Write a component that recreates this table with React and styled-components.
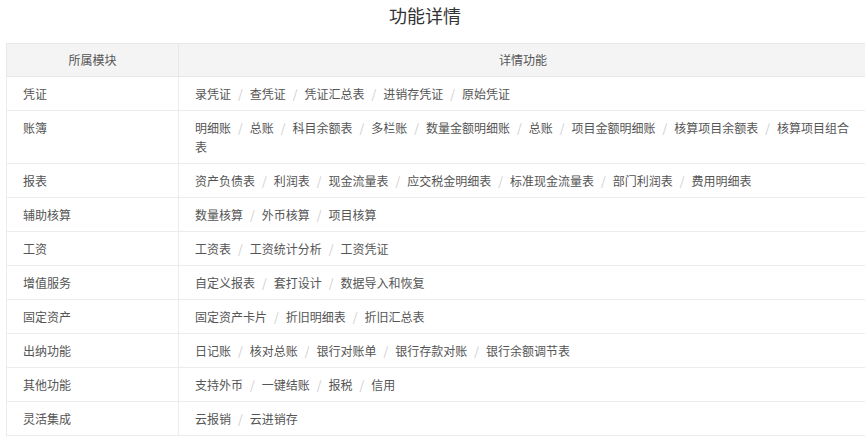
import React from "react";
import styled, { createGlobalStyle } from "styled-components";

const GlobalStyle = createGlobalStyle`
  html, body {
    margin: 0;
    padding: 0;
    background: #fff;
    overflow: hidden;
  }
  body {
    font-family: "Noto Sans CJK SC", "Noto Sans", sans-serif;
  }
`;

const rows = [
  { module: "凭证", items: ["录凭证", "查凭证", "凭证汇总表", "进销存凭证", "原始凭证"] },
  {
    module: "账簿",
    items: [
      "明细账",
      "总账",
      "科目余额表",
      "多栏账",
      "数量金额明细账",
      "总账",
      "项目金额明细账",
      "核算项目余额表",
      "核算项目组合表",
    ],
  },
  {
    module: "报表",
    items: ["资产负债表", "利润表", "现金流量表", "应交税金明细表", "标准现金流量表", "部门利润表", "费用明细表"],
  },
  { module: "辅助核算", items: ["数量核算", "外币核算", "项目核算"] },
  { module: "工资", items: ["工资表", "工资统计分析", "工资凭证"] },
  { module: "增值服务", items: ["自定义报表", "套打设计", "数据导入和恢复"] },
  { module: "固定资产", items: ["固定资产卡片", "折旧明细表", "折旧汇总表"] },
  { module: "出纳功能", items: ["日记账", "核对总账", "银行对账单", "银行存款对账", "银行余额调节表"] },
  { module: "其他功能", items: ["支持外币", "一键结账", "报税", "信用"] },
  { module: "灵活集成", items: ["云报销", "云进销存"] },
];

export default function App() {
  return (
    <Page>
      <GlobalStyle />
      <Title>功能详情</Title>
      <Table>
        <colgroup>
          <col style={{ width: 172 }} />
          <col />
        </colgroup>
        <thead>
          <tr>
            <HeadCell>所属模块</HeadCell>
            <HeadCell>详情功能</HeadCell>
          </tr>
        </thead>
        <tbody>
          {rows.map((row, index) => (
            <tr key={index}>
              <Cell>{row.module}</Cell>
              <Cell>
                {row.items.map((item, i) => (
                  <React.Fragment key={i}>
                    {i > 0 && <Sep>/</Sep>}
                    {item}
                  </React.Fragment>
                ))}
              </Cell>
            </tr>
          ))}
        </tbody>
      </Table>
    </Page>
  );
}

const Page = styled.div`
  width: 865px;
  height: 440px;
  overflow: hidden;
`;

const Title = styled.h2`
  margin: 0;
  height: 43px;
  line-height: 30px;
  width: 850px;
  text-align: center;
  font-size: 18px;
  font-weight: 400;
  color: #333;
`;

const Table = styled.table`
  margin-left: 6px;
  width: 862px;
  border-collapse: collapse;
  table-layout: fixed;
  font-size: 12px;
  color: #555;
`;

const HeadCell = styled.th`
  background: #f4f4f4;
  border: 1px solid #e8e8e8;
  font-weight: 400;
  text-align: center;
  line-height: 19px;
  padding: 6px 16px 7px;
  color: #555;
`;

const Cell = styled.td`
  border: 1px solid #ececec;
  text-align: left;
  line-height: 19px;
  padding: 7px 16px;
  vertical-align: top;
`;

const Sep = styled.span`
  color: #ccc;
  padding: 0 7px;
`;
